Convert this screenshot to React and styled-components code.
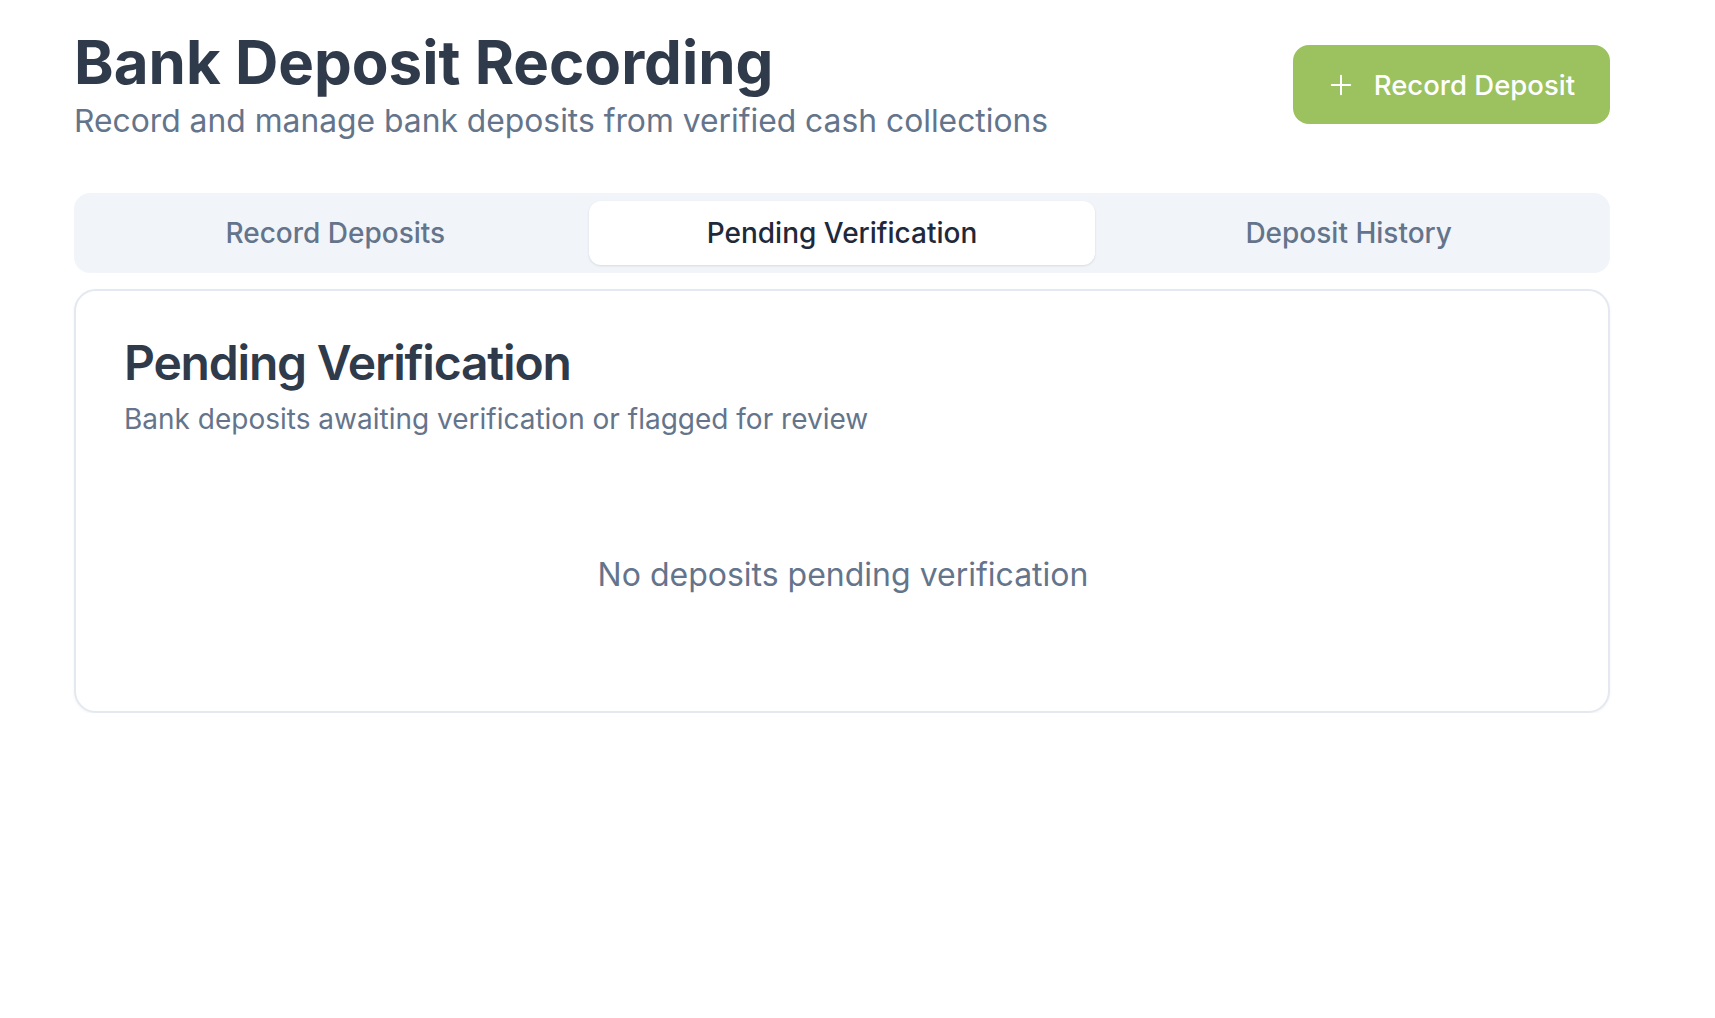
import React, { useState } from "react";
import styled, { createGlobalStyle } from "styled-components";

const GlobalStyle = createGlobalStyle`
  html, body {
    margin: 0;
    padding: 0;
    background: #ffffff;
  }
  body {
    font-family: Inter, "Noto Sans", "Liberation Sans", sans-serif;
    -webkit-font-smoothing: antialiased;
  }
  * { box-sizing: border-box; }
`;

const Page = styled.main`
  width: 1536px;
  margin-left: 74px;
  padding-top: 32px;
`;

const Header = styled.header`
  display: flex;
  justify-content: space-between;
  align-items: flex-start;
  margin-bottom: 51px;
`;

const TitleBlock = styled.div`
  display: flex;
  flex-direction: column;
`;

const Title = styled.h1`
  margin: 0;
  font-size: 60px;
  line-height: 1;
  font-weight: 700;
  color: #2f3a4b;
`;

const Subtitle = styled.p`
  margin: 7px 0 0;
  font-size: 31.8px;
  line-height: 43px;
  font-weight: 400;
  color: #64748b;
`;

const PrimaryButton = styled.button`
  display: flex;
  align-items: center;
  gap: 22px;
  height: 79px;
  padding: 0 35px 0 37px;
  border: none;
  border-radius: 16px;
  background: #9bc25e;
  color: #ffffff;
  font-family: inherit;
  font-size: 27.5px;
  font-weight: 500;
  cursor: pointer;
  margin-top: 13px;
`;

const TabList = styled.div`
  display: grid;
  grid-template-columns: repeat(3, 1fr);
  padding: 8px;
  height: 80px;
  border-radius: 16px;
  background: #f1f5f9;
  margin-bottom: 16px;
`;

const Tab = styled.button`
  display: flex;
  align-items: center;
  justify-content: center;
  border: none;
  border-radius: 12px;
  font-family: inherit;
  font-size: 28px;
  font-weight: 500;
  cursor: pointer;
  background: ${(p) => (p.$active ? "#ffffff" : "transparent")};
  color: ${(p) => (p.$active ? "#1e293b" : "#64748b")};
  box-shadow: ${(p) =>
    p.$active ? "0 1px 3px rgba(15, 23, 42, 0.08), 0 1px 2px rgba(15, 23, 42, 0.04)" : "none"};
`;

const Card = styled.section`
  height: 424px;
  border: 2px solid #e4e8f0;
  border-radius: 22px;
  background: #ffffff;
  box-shadow: 0 1px 3px rgba(15, 23, 42, 0.05);
  padding: 48px 46px 47px 48px;
`;

const CardTitle = styled.h2`
  margin: 0;
  font-size: 48px;
  line-height: 1;
  font-weight: 600;
  color: #2f3a4b;
  letter-spacing: -1.2px;
`;

const CardDescription = styled.p`
  margin: 12px 0 0;
  font-size: 28px;
  line-height: 41px;
  color: #64748b;
`;

const EmptyState = styled.div`
  padding-top: 112px;
  text-align: center;
  font-size: 32px;
  line-height: 46px;
  color: #64748b;
`;

const PlusIcon = () => (
  <svg width="22" height="22" viewBox="0 0 24 24" fill="none" stroke="currentColor" strokeWidth="2.2" strokeLinecap="round">
    <path d="M12 2v20M2 12h20" />
  </svg>
);

const tabs = ["Record Deposits", "Pending Verification", "Deposit History"];

export default function App() {
  const [active, setActive] = useState(1);
  return (
    <>
      <GlobalStyle />
      <Page>
        <Header>
          <TitleBlock>
            <Title>Bank Deposit Recording</Title>
            <Subtitle>Record and manage bank deposits from verified cash collections</Subtitle>
          </TitleBlock>
          <PrimaryButton>
            <PlusIcon />
            Record Deposit
          </PrimaryButton>
        </Header>
        <TabList>
          {tabs.map((t, i) => (
            <Tab key={t} $active={i === active} onClick={() => setActive(i)}>
              {t}
            </Tab>
          ))}
        </TabList>
        <Card>
          <CardTitle>Pending Verification</CardTitle>
          <CardDescription>Bank deposits awaiting verification or flagged for review</CardDescription>
          <EmptyState>No deposits pending verification</EmptyState>
        </Card>
      </Page>
    </>
  );
}
